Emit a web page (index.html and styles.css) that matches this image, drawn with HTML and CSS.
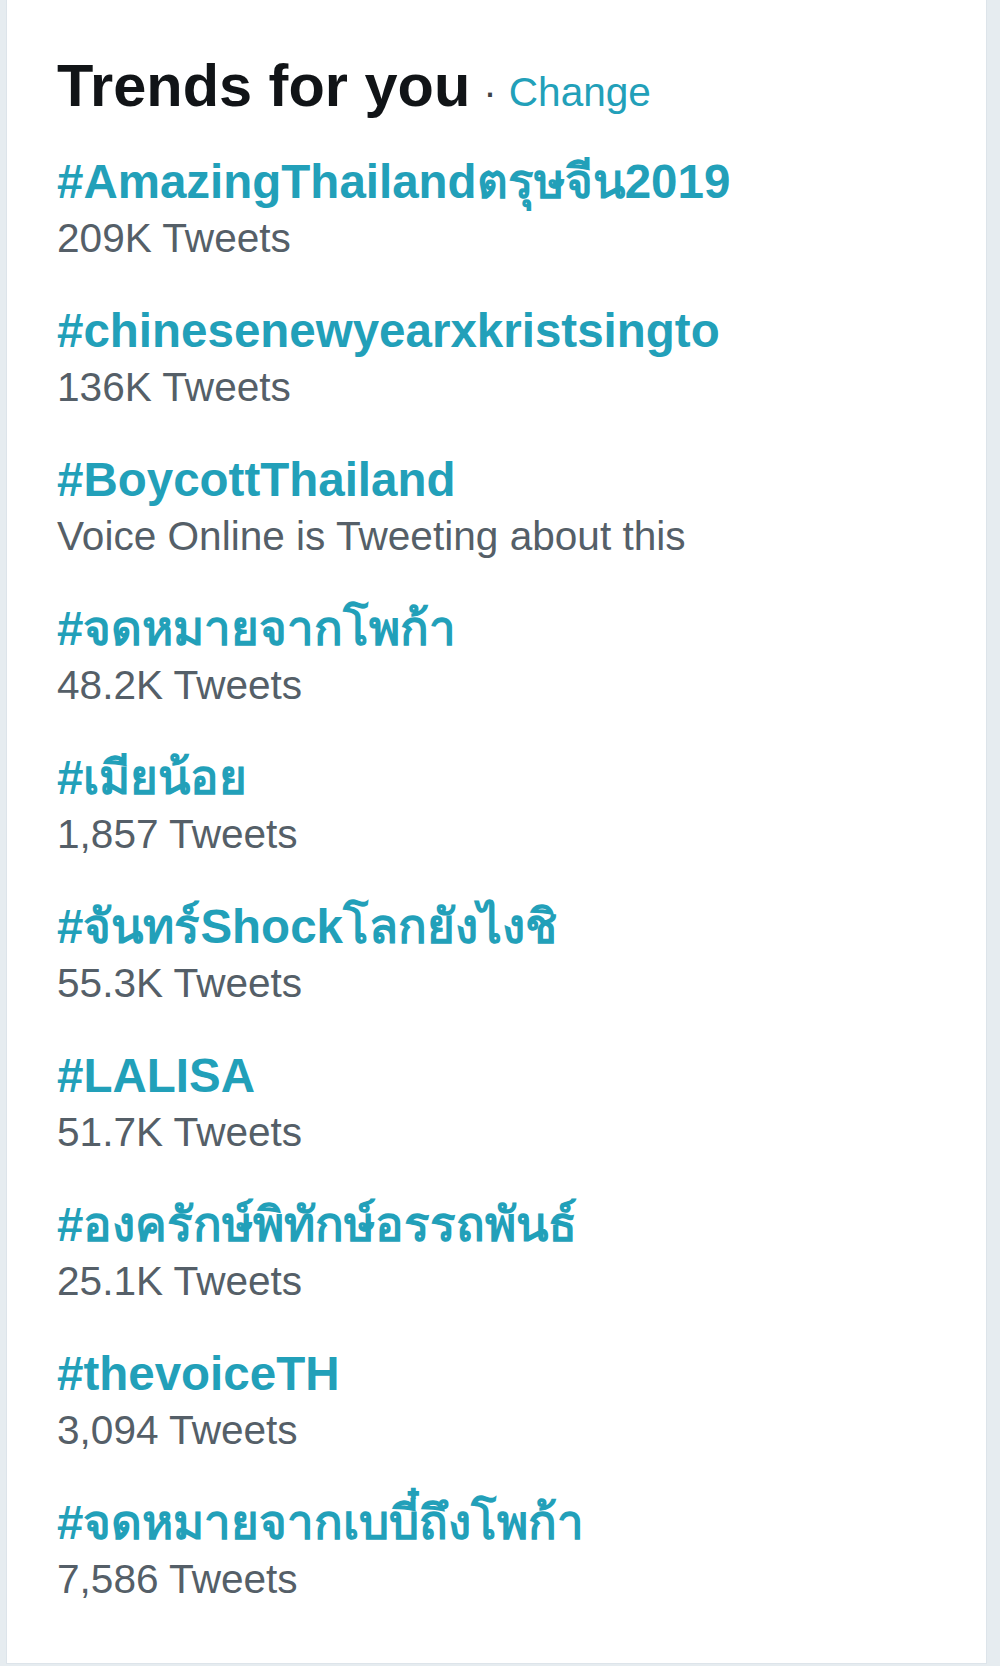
FILE: index.html
```html
<!DOCTYPE html>
<html lang="en">
<head>
    <meta charset="UTF-8">
    <meta name="viewport" content="width=device-width, initial-scale=1.0">
    <title>Trends for you</title>
    <link rel="stylesheet" href="styles.css">
</head>
<body>
    <div class="trends-card">
        <div class="trends-header">
            <h2>Trends for you</h2>
            <span class="middot">·</span>
            <a class="change-link" href="#">Change</a>
        </div>
        <ul class="trend-list">
            <li class="trend-item">
                <a class="trend-name" href="#">#AmazingThailandตรุษจีน2019</a>
                <div class="trend-meta">209K Tweets</div>
            </li>
            <li class="trend-item">
                <a class="trend-name" href="#">#chinesenewyearxkristsingto</a>
                <div class="trend-meta">136K Tweets</div>
            </li>
            <li class="trend-item">
                <a class="trend-name" href="#">#BoycottThailand</a>
                <div class="trend-meta">Voice Online is Tweeting about this</div>
            </li>
            <li class="trend-item">
                <a class="trend-name" href="#">#จดหมายจากโพก้า</a>
                <div class="trend-meta">48.2K Tweets</div>
            </li>
            <li class="trend-item">
                <a class="trend-name" href="#">#เมียน้อย</a>
                <div class="trend-meta">1,857 Tweets</div>
            </li>
            <li class="trend-item">
                <a class="trend-name" href="#">#จันทร์Shockโลกยังไงชิ</a>
                <div class="trend-meta">55.3K Tweets</div>
            </li>
            <li class="trend-item">
                <a class="trend-name" href="#">#LALISA</a>
                <div class="trend-meta">51.7K Tweets</div>
            </li>
            <li class="trend-item">
                <a class="trend-name" href="#">#องครักษ์พิทักษ์อรรถพันธ์</a>
                <div class="trend-meta">25.1K Tweets</div>
            </li>
            <li class="trend-item">
                <a class="trend-name" href="#">#thevoiceTH</a>
                <div class="trend-meta">3,094 Tweets</div>
            </li>
            <li class="trend-item">
                <a class="trend-name" href="#">#จดหมายจากเบบี๋ถึงโพก้า</a>
                <div class="trend-meta">7,586 Tweets</div>
            </li>
        </ul>
    </div>
</body>
</html>
```

FILE: styles.css
```css
body {
    margin: 0;
    background: #e6ecf0;
    font-family: 'Liberation Sans', 'Noto Sans', 'DejaVu Sans', sans-serif;
}
.trends-card {
    background: #fff;
    border: 1px solid #dde4ea;
    border-top: none;
    margin: 0 13px 0 6px;
    padding: 51px 40px 57px 50px;
}
.trends-header {
    display: flex;
    align-items: baseline;
    margin-bottom: 32px;
}
.trends-header h2 {
    margin: 0;
    font-size: 59.5px;
    line-height: 70px;
    font-weight: 700;
    color: #111417;
}
.middot {
    font-size: 40.6px;
    color: #3d4247;
    margin: 0 12px 0 13px;
}
.change-link {
    font-size: 40.6px;
    color: #22a0b9;
    text-decoration: none;
}
.trend-list {
    list-style: none;
    margin: 0;
    padding: 0;
    display: flex;
    flex-direction: column;
    gap: 37px;
}
.trend-name {
    display: block;
    font-size: 47.5px;
    line-height: 58px;
    font-weight: 700;
    color: #22a0b9;
    text-decoration: none;
}
.trend-meta {
    font-size: 40.6px;
    line-height: 54px;
    color: #555f68;
}
```
